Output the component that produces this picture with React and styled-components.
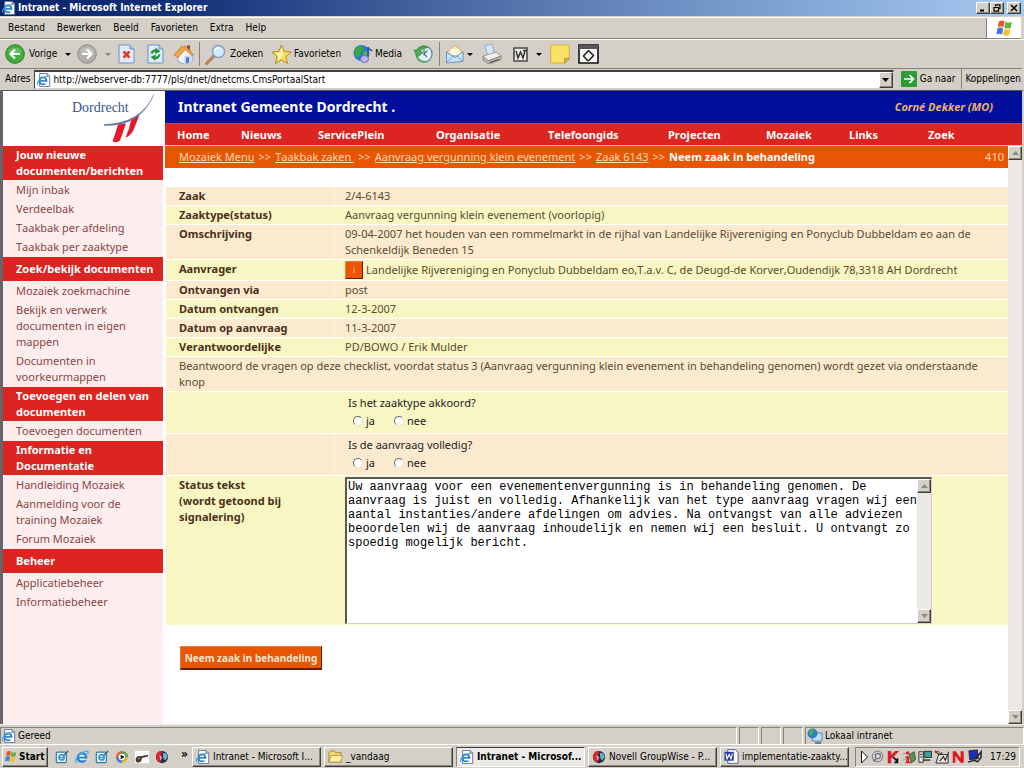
import React from "react";
import styled, { createGlobalStyle, css } from "styled-components";

const UI = '"DejaVu Sans Condensed", "DejaVu Sans", sans-serif';
const PAGE = '"Noto Sans", "Open Sans", sans-serif';
const FACE = "#d4d0c8";

const Global = createGlobalStyle`
  * { box-sizing: border-box; }
  body { margin: 0; background: ${FACE}; font-family: ${UI}; font-size: 10px; line-height: 14px; color: #000; }
  button, input, textarea { font: inherit; color: inherit; margin: 0; }
  button { padding: 0; border: 0; background: none; }
  svg { display: block; flex: none; }
`;

const raised = css`
  border: 1px solid;
  border-color: #fff #404040 #404040 #fff;
  box-shadow: inset -1px -1px 0 #8a877f;
`;
const sunken = css`
  border: 1px solid;
  border-color: #85827a #fff #fff #85827a;
`;

const Screen = styled.div`
  min-height: 100vh;
  display: flex;
  flex-direction: column;
`;

/* ---------- browser chrome ---------- */
const TitleBar = styled.header`
  display: flex;
  align-items: center;
  gap: 2px;
  height: 16px;
  padding: 0 3px 0 2px;
  color: #fff;
  font-weight: bold;
  background: linear-gradient(90deg, #0a246a 0%, #14307a 18%, #46649f 42%, #7295c8 68%, #a6caf0 100%);
  h1 { flex: 1; margin: 0; font-size: 10px; line-height: 16px; }
`;
const WindowButton = styled.button`
  ${raised}
  width: 14px;
  height: 12px;
  background: ${FACE};
  display: grid;
  place-items: center;
  margin-left: ${(p) => (p.$apart ? "1px" : "-2px")};
`;
const MenuBar = styled.nav`
  display: flex;
  align-items: center;
  height: 22px;
  margin-right: 3px;
  padding-left: 8px;
  gap: 12px;
  border-top: 1px solid #fff;
  border-bottom: 1px solid #85827a;
  margin-top: 1px;
`;
const MenuButton = styled.button`line-height: 14px;`;
const FlagBox = styled.div`
  margin-left: auto;
  align-self: stretch;
  width: 35px;
  background: #fff;
  border-left: 1px solid #85827a;
  display: grid;
  place-items: center;
`;
const Toolbar = styled.div`
  display: grid;
  grid-template-columns: 72px 41px 29px 26px 26px 72px 82px 60px 26px 43px 31px 37px 28px 28px;
  align-items: center;
  height: 29px;
  padding-left: 5px;
  border-top: 1px solid #fff;
`;
const Tool = styled.button`
  display: flex;
  align-items: center;
  gap: ${(p) => (p.$snug ? "2px" : "4px")};
  height: 24px;
  padding-left: ${(p) => (p.$divided ? "5px" : "0")};
  border-left: ${(p) => (p.$divided ? "1px solid #85827a" : "0")};
`;
const Arrow = styled.span`
  border: 3px solid transparent;
  border-top-color: ${(p) => (p.$dim ? "#8b8880" : "#000")};
  border-bottom: 0;
  margin-left: ${(p) => (p.$gap ? "4px" : "0")};
`;
const AddressBar = styled.form`
  display: flex;
  align-items: center;
  height: 21px;
  padding-left: 5px;
  margin-right: 2px;
  border-top: 1px solid #85827a;
`;
const AddressField = styled.div`
  flex: 1;
  display: flex;
  align-items: center;
  height: 19px;
  margin: 0 4px;
  padding-left: 2px;
  background: #fff;
  border: 1px solid #d4d0c8;
  border-top: 2px solid #404040;
  border-left: 1px solid #404040;
  input { flex: 1; min-width: 0; border: 0; padding: 0 0 0 2px; outline: 0; background: transparent; }
`;
const SquareButton = styled.button`
  ${raised}
  width: 14px;
  height: ${(p) => p.$h || 14}px;
  flex: none;
  background: ${FACE};
  display: grid;
  place-items: center;
`;
const GoButton = styled.button`
  display: flex;
  align-items: center;
  gap: 3px;
  padding: 0 6px 0 3px;
`;
const LinksButton = styled.button`
  align-self: stretch;
  padding: 0 1px 0 3px;
  border-left: 1px solid #85827a;
`;

/* ---------- page frames ---------- */
const Viewport = styled.div`
  flex: 1;
  display: grid;
  grid-template-columns: 160px minmax(0, 1fr);
  grid-template-rows: auto 1fr;
  column-gap: 2px;
  margin-top: 1px;
  background: #fff;
  border-left: 3px solid #66646a;
  border-right: 2px solid ${FACE};
  border-top: 1px solid #55535a;
  font-family: ${PAGE};
  font-size: 11px;
  line-height: 16px;
  font-kerning: none;
`;
const LogoBox = styled.div`
  display: flex;
  justify-content: flex-end;
  padding-right: 7px;
`;
const Masthead = styled.div`
  display: flex;
  flex-direction: column;
  border-bottom: 1px solid #f1b9a8;
`;
const SiteTitle = styled.div`
  display: flex;
  align-items: center;
  justify-content: space-between;
  height: 32px;
  padding: 0 29px 0 13px;
  background: #00109c;
  color: #fff;
  h2 { margin: 0; font-size: 14px; line-height: 20px; }
  em { font-size: 11px; font-weight: bold; color: #eeb070; }
`;
const SiteNav = styled.nav`
  display: grid;
  grid-template-columns: 64fr 77fr 118fr 112fr 120fr 98fr 83fr 79fr 94fr;
  align-items: center;
  height: 22px;
  padding-left: 12px;
  background: #dc2420;
  border-top: 1px solid #b04a68;
  a { color: #fff; font-weight: bold; text-decoration: none; }
`;
const Sidebar = styled.aside`
  background: #fdeeed;
  padding-bottom: 16px;
  h3 {
    margin: 0;
    padding: 1px 8px 1px 13px;
    font-size: 11px;
    line-height: 16px;
    color: #fff;
    background: #dc2420;
  }
`;
const Single = styled.h3`
  && { padding-top: 4px; padding-bottom: 4px; }
`;
const SideList = styled.ul`
  list-style: none;
  margin: 0;
  padding: 2px 8px 0 13px;
  a { display: block; padding-bottom: 3px; color: #8a4546; text-decoration: none; }
  li:last-child a { padding-bottom: 2px; }
`;
const MainFrame = styled.div`
  display: flex;
  min-width: 0;
`;
const Main = styled.main`
  flex: 1;
  min-width: 0;
  padding-bottom: 20px;
`;
const Crumbs = styled.nav`
  display: flex;
  align-items: center;
  gap: 4px;
  height: 22px;
  padding: 0 4px 0 14px;
  margin-bottom: 18px;
  background: #ea5504;
  color: #fbd9b4;
  white-space: nowrap;
  a { color: #fbd9b4; }
  strong { color: #fff; }
  span:last-child { margin-left: auto; }
`;
const CaseTable = styled.table`
  width: calc(100% - 1px);
  margin-left: 1px;
  border-collapse: separate;
  border-spacing: 0 1px;
  color: #5c4a33;
  th, td { vertical-align: top; text-align: left; padding: 1px 12px 1px 13px; }
  th { width: 169px; color: #4c2f1a; border-right: 1px solid #fdf6dc; }
  td { padding-left: 10px; }
  td[colspan] { padding-left: 13px; }
`;
const Row = styled.tr`
  background: ${(p) => (p.$alt ? "#f8f6c2" : "#fbeacd")};
`;
const Applicant = styled.div`
  display: flex;
  align-items: center;
  gap: 3px;
  height: 18px;
`;
const InfoButton = styled.button`
  width: 18px;
  height: 18px;
  border: 1px solid;
  border-color: #f37a35 #5c1f10 #5c1f10 #f37a35;
  background: #ea5504;
  color: #fbd9b4;
  font-size: 8px;
  line-height: 14px;
`;
const Question = styled.fieldset`
  border: 0;
  margin: 0;
  padding: 2px 0 2px 3px;
  color: #222;
  legend { padding: 0; float: left; }
  div { clear: both; display: flex; gap: 19px; padding: 1px 0 0 5px; }
  label { display: flex; align-items: center; gap: 3px; height: 18px; }
  input {
    appearance: none;
    width: 10px;
    height: 10px;
    border-radius: 50%;
    background: #fff;
    border: 1px solid;
    border-color: #6d6a60 #e4e0cc #e4e0cc #6d6a60;
  }
  input:checked { background: radial-gradient(#000 0 2px, #fff 3px); }
`;
const StatusBox = styled.div`
  display: flex;
  max-width: 587px;
  height: 147px;
  border: 1px solid #d4d0c8;
  border-top: 2px solid #5a5850;
  border-left: 2px solid #5a5850;
  background: #fff;
  textarea {
    flex: 1;
    min-width: 0;
    border: 0;
    padding: 1px 0 0 1px;
    outline: 0;
    resize: none;
    overflow: hidden;
    white-space: pre;
    font-family: "Liberation Mono", monospace;
    font-size: 12px;
    line-height: 14px;
    color: #000;
    background: transparent;
  }
`;
const ScrollTrack = styled.div`
  width: 14px;
  flex: none;
  display: flex;
  flex-direction: column;
  justify-content: space-between;
  background: #ebe9e6;
`;
const SubmitButton = styled.button`
  margin: 20px 0 0 15px;
  width: 142px;
  height: 24px;
  border: 1px solid;
  border-color: #f37a35 #5c1f10 #5c1f10 #f37a35;
  border-bottom-width: 2px;
  background: #ea5504;
  color: #fde6d0;
  font-size: 10px;
  font-weight: bold;
`;

/* ---------- status bar and task bar ---------- */
const StatusBar = styled.footer`
  display: grid;
  grid-template-columns: minmax(0, 1fr) 20px 20px 20px 219px;
  gap: 2px;
  height: 20px;
  padding-top: 2px;
  border-top: 1px solid #f4f3f0;
`;
const StatusCell = styled.div`
  ${sunken}
  display: flex;
  align-items: center;
  gap: 2px;
  padding-left: 1px;
`;
const TaskBar = styled.div`
  display: flex;
  align-items: center;
  height: 24px;
  padding: 1px 4px 1px 2px;
  border-top: 1px solid #fff;
`;
const StartButton = styled.button`
  ${raised}
  display: flex;
  align-items: center;
  gap: 2px;
  width: 46px;
  height: 20px;
  padding-left: 1px;
  font-weight: bold;
`;
const QuickLaunch = styled.div`
  display: flex;
  align-items: center;
  gap: 6px;
  padding: 0 4px 0 7px;
  strong { font-size: 12px; line-height: 12px; padding: 0 0 6px 6px; }
`;
const Tasks = styled.div`
  flex: 1;
  min-width: 0;
  display: flex;
  gap: 3px;
`;
const Task = styled.button`
  ${(p) => (p.$active ? sunken : raised)}
  flex: 1;
  min-width: 0;
  height: 20px;
  display: flex;
  align-items: center;
  gap: 3px;
  padding: 0 3px;
  background: ${(p) => (p.$active ? "#eceae6" : FACE)};
  font-weight: ${(p) => (p.$active ? "bold" : "normal")};
  border-top-color: ${(p) => (p.$active ? "#404040" : "#fff")};
  text-align: left;
  white-space: nowrap;
`;
const Tray = styled.div`
  ${sunken}
  display: flex;
  align-items: center;
  gap: 2px;
  height: 20px;
  width: 165px;
  margin-left: 6px;
  padding: 0 3px 0 4px;
  time { margin-left: auto; }
`;

/* ---------- drawings ---------- */
const Svg = ({ w = 16, h = w, box = "0 0 16 16", children }) => (
  <svg width={w} height={h} viewBox={box} aria-hidden="true">{children}</svg>
);
const IePage = ({ s = 14 }) => (
  <Svg w={s}>
    <path d="M3 .5h8.500L14.500 3.500V15.500H3Z" fill="#fff" stroke="#5a6b91" />
    <path d="M11.500 .5v3h3" fill="#cdd8ea" stroke="#5a6b91" />
    <circle cx="6.800" cy="9" r="4" fill="#fff" stroke="#1f7fce" strokeWidth="2.200" />
    <path d="M3.500 9h7" stroke="#1f7fce" strokeWidth="1.800" />
    <path d="M8.500 10h4v2.200h-4z" fill="#fff" />
    <path d="M1 13.500C-1 10 6 3.500 12 4" fill="none" stroke="#3f9fe0" strokeWidth="1.200" />
  </Svg>
);
const IeLogo = ({ s = 15 }) => (
  <Svg w={s}>
    <circle cx="8" cy="8.500" r="4.800" fill="#e8f4fc" stroke="#1e80d0" strokeWidth="2.600" />
    <path d="M3.500 8.700h9" stroke="#1e80d0" strokeWidth="2" />
    <path d="M10 9.800h5v2h-5z" fill={FACE} />
    <path d="M2 15C-2 10 7 1 14.500 1.500c1 .5.500 2-.5 3.500" fill="none" stroke="#4aa8e8" strokeWidth="1.400" />
  </Svg>
);
const Flag = ({ s = 16 }) => (
  <Svg w={s}>
    <path d="M3.500 2Q6 .5 8.500 2L7.500 7.500Q5 6 2.500 7.300Z" fill="#e8572a" />
    <path d="M9.300 2.500Q12 4 15 2.500L14 8Q11 9.200 8.300 7.800Z" fill="#62b144" />
    <path d="M2.300 8.200Q5 7 7.300 8.400L6.300 13.800Q4 12.500 1.200 13.800Z" fill="#3d7bd8" />
    <path d="M8.200 8.700Q11 10.200 13.800 8.900L12.800 14.300Q10 15.500 7.200 14.200Z" fill="#f4c12c" />
  </Svg>
);
const Glyph = ({ d, sw = 1.5 }) => (
  <Svg w={8} box="0 0 8 8"><path d={d} fill="none" stroke="#000" strokeWidth={sw} /></Svg>
);
const Tri = ({ up, color = "#8b8880" }) => (
  <Svg w={7} h={4} box="0 0 7 4"><path d={up ? "M0 4L3.500 0L7 4Z" : "M0 0h7L3.500 4Z"} fill={color} /></Svg>
);
const RoundArrow = ({ back }) => (
  <Svg w={20} box="0 0 20 20">
    <circle cx="10" cy="10" r="9.300" fill={back ? "#3fae3c" : "#b2b0ac"} stroke={back ? "#2b7e29" : "#8f8d89"} />
    <path d="M3 8a7.500 6.500 0 0 1 14 0q-7 3-14 0Z" fill="#fff" opacity=".22" />
    <path d={back ? "M15 10H6M10 5.500L5.500 10L10 14.500" : "M5 10h9M10 5.500L14.500 10L10 14.500"} fill="none" stroke="#fff" strokeWidth="2.200" />
  </Svg>
);
const Sheet = ({ children }) => (
  <Svg w={17} h={20} box="0 0 17 20">
    <path d="M1 1h11l4 4v14H1Z" fill="#dfeafb" stroke="#6f8fc4" />
    <path d="M12 1v4h4" fill="#b9cdeb" stroke="#6f8fc4" />
    {children}
  </Svg>
);
const StopIcon = () => (
  <Sheet><path d="M5.500 7.500l6 6M11.500 7.500l-6 6" stroke="#e23a1c" strokeWidth="2.600" /></Sheet>
);
const RefreshIcon = () => (
  <Sheet>
    <path d="M4.500 9.500Q6 5.500 10 7" fill="none" stroke="#1d9632" strokeWidth="2.200" />
    <path d="M8.500 3.500l4.800 4L8 10Z" fill="#1d9632" />
    <path d="M12.500 10.500Q11 15 7 13.500" fill="none" stroke="#1d9632" strokeWidth="2.200" />
    <path d="M8.500 17L3.500 13l5.300-2.500Z" fill="#1d9632" />
  </Sheet>
);
const HomeIcon = () => (
  <Svg w={21} box="0 0 21 21">
    <path d="M14 1.500h3v5h-3z" fill="#8c4a2b" />
    <path d="M5 10l7-6 7 7v7l-8 2-6-2.500Z" fill="#f5f6fb" stroke="#7f92bd" strokeWidth=".8" />
    <path d="M11 12l8-1v7l-8 2Z" fill="#cfdcf2" />
    <path d="M.8 11L8 3l5-.8 7.500 8.500-1.700.8L12 5.500 5 13.500Z" fill="#f2a343" stroke="#a9672a" strokeWidth=".6" />
    <path d="M13 13.500l3-.4v5.400l-3 .7Z" fill="#4b79c4" />
  </Svg>
);
const SearchIcon = () => (
  <Svg w={21} box="0 0 21 21">
    <path d="M1.500 19.500L9 12" stroke="#b98463" strokeWidth="3.200" strokeLinecap="round" />
    <circle cx="13.500" cy="7.500" r="6" fill="#cfeafb" stroke="#7d9cc4" strokeWidth="1.300" />
    <path d="M9.800 6.500q1.500-3 4.500-2.700" fill="none" stroke="#fff" strokeWidth="1.500" />
  </Svg>
);
const StarIcon = () => (
  <Svg w={21} box="0 0 21 21">
    <path d="M10.500 1l2.700 6.400 7 .6-5.300 4.600 1.700 7-6.100-3.800-6.100 3.800 1.700-7L.8 8l7-.6Z" fill="#f9dc55" stroke="#b88a1c" />
    <path d="M10.500 3.500l1.700 5-1.700 5.500-3.800 2.500 1-4.500L4 9l4.500-.7Z" fill="#fff3a8" />
  </Svg>
);
const MediaIcon = () => (
  <Svg w={20} box="0 0 20 20">
    <circle cx="8.500" cy="9" r="8" fill="#2d79c9" />
    <path d="M2 5q3-4 7-3l2 3-3 3-1 4-3 1Q0 10 2 5Z" fill="#3aa545" />
    <path d="M10 8l4-1 2 3-2 4-3-1Z" fill="#52b95a" />
    <path d="M15 3v10M15 3q1 3 4.500 3.500" fill="none" stroke="#3a4fa0" strokeWidth="1.600" />
    <ellipse cx="11.500" cy="15" rx="4" ry="3.600" fill="#b9b6ec" stroke="#6d6ac0" />
  </Svg>
);
const HistoryIcon = () => (
  <Svg w={20} box="0 0 20 20">
    <circle cx="11" cy="10" r="8" fill="#e2f1fa" stroke="#6b8f9e" strokeWidth="1.400" />
    <path d="M11 4.500V10l3.500-3.500M11 10l3 3" fill="none" stroke="#4e7285" strokeWidth="1.200" />
    <path d="M15 3.500Q8 0 4 6.500L1 6l3.500 7L10 8.500 7 7.500Q9.500 3.500 15 3.500Z" fill="#4bb24c" stroke="#2b7e2d" strokeWidth=".7" />
    <path d="M4 12.500Q6 18 12 17.500" fill="none" stroke="#4bb24c" strokeWidth="1.800" />
  </Svg>
);
const MailIcon = () => (
  <Svg w={20} box="0 0 20 20">
    <path d="M2 8l8-7 8 7v3H2Z" fill="#fbe3ae" stroke="#c79d5c" strokeWidth=".8" />
    <path d="M5 5h9v6H5Z" fill="#fff7e0" />
    <path d="M1.500 8l8.500 5.500L18 7.500v10L1.500 19Z" fill="#c3e2f8" stroke="#5f8fc0" strokeWidth=".9" />
    <path d="M1.500 19l6.500-7M18 17.500L12 12" stroke="#5f8fc0" strokeWidth=".8" />
  </Svg>
);
const PrintIcon = () => (
  <Svg w={20} h={21} box="0 0 20 21">
    <path d="M3 1.500l7-1 2.500 9-7 1.500Z" fill="#d6eafc" stroke="#7ba0d0" strokeWidth=".8" />
    <path d="M1 12l13-4 5 4-13 5Z" fill="#efeeec" stroke="#8c8a86" strokeWidth=".8" />
    <path d="M1 12v4l6 4 12-4.500V12L6.500 17Z" fill="#bdbbb6" stroke="#7e7c78" strokeWidth=".8" />
    <path d="M8 18.500l9-3" stroke="#4b4a48" strokeWidth="1.200" />
  </Svg>
);
const WordEdit = () => (
  <Svg w={15} box="0 0 15 15">
    <path d="M1 1h13v13H1Z" fill="#f1efeb" stroke="#4a4a4a" strokeWidth="1.600" />
    <path d="M3 4l2 7 2.500-6L10 11l2-7M10 3.500h3.500" fill="none" stroke="#333" strokeWidth="1.500" />
  </Svg>
);
const NoteIcon = () => (
  <Svg w={20} box="0 0 20 20">
    <path d="M.7 1h18.600v13.500L14.500 19H.7Z" fill="#fbe168" stroke="#cfa628" strokeWidth=".8" />
    <path d="M14.500 19v-4.500h4.800Z" fill="#e8b93a" stroke="#a67f16" strokeWidth=".7" />
  </Svg>
);
const FrameIcon = () => (
  <Svg w={21} h={20} box="0 0 21 20">
    <path d="M1 1h19v18H1Z" fill="#f5f4f1" stroke="#111" strokeWidth="1.600" />
    <path d="M1 1h19v4H1Z" fill="#55555a" />
    <path d="M10.500 6.500l-5 5.500 4.500 5M10.500 6.500l5 5-5 5.500" fill="none" stroke="#222" strokeWidth="1.500" />
  </Svg>
);
const GoIcon = () => (
  <Svg w={16}>
    <rect width="16" height="16" rx="1" fill="#2f9a38" />
    <path d="M3 8h9M8.500 4l4 4-4 4" fill="none" stroke="#fff" strokeWidth="1.700" />
  </Svg>
);
const NoteBook = () => (
  <Svg w={14}>
    <rect x="1.500" y="2.500" width="11.500" height="12" rx="1.500" fill="#e6f4fb" stroke="#2f7fae" strokeWidth="1.400" />
    <circle cx="7.500" cy="8.500" r="3" fill="none" stroke="#2b8fc8" strokeWidth="1.700" />
    <path d="M5 8.700h5" stroke="#2b8fc8" strokeWidth="1.300" />
    <path d="M10.500 6l4.500-5" stroke="#2c5f86" strokeWidth="1.600" />
  </Svg>
);
const PlayerIcon = () => (
  <Svg w={14}>
    <path d="M8 8V1a7 7 0 0 0-7 7Z" fill="#e9662c" />
    <path d="M8 8H1a7 7 0 0 0 7 7Z" fill="#3c7fd6" />
    <path d="M8 8v7a7 7 0 0 0 7-7Z" fill="#f2bf2f" />
    <path d="M8 8h7a7 7 0 0 0-7-7Z" fill="#54a944" />
    <circle cx="8" cy="8" r="4.300" fill="#fff" stroke="#444" strokeWidth=".6" />
    <path d="M6.500 5.300L11 8l-4.500 2.700Z" fill="#111" />
  </Svg>
);
const HandIcon = () => (
  <Svg w={14}>
    <rect y="1" width="16" height="14" fill="#fff" />
    <path d="M1 9q2-3 5-2l9-1.500v2L8 9l-1 4-4 1.500Q0 13 1 9Z" fill="#4c3a2b" />
    <path d="M3 10l3-1" stroke="#c69a6c" />
  </Svg>
);
const GroupWise = () => (
  <Svg w={14}>
    <circle cx="8" cy="8" r="7" fill="#16324a" />
    <path d="M1.500 5Q4 0 8 1.500L7 6l2 3-3 5Q0 12 1.500 5Z" fill="#d8262c" />
    <path d="M9 3l4 1 1.500 4-3 4-2-3Z" fill="#67b8c4" />
    <path d="M5 7l2 1-1 3" stroke="#fff" fill="none" />
  </Svg>
);
const FolderIcon = () => (
  <Svg w={15}>
    <path d="M1 4l2-2h4l1 2h6v10H1Z" fill="#f3d873" stroke="#a8862c" />
    <path d="M3.500 7H15.500L13.500 14H1Z" fill="#fdf0a6" stroke="#a8862c" strokeWidth=".8" />
  </Svg>
);
const WordDoc = () => (
  <Svg w={15}>
    <path d="M4 .7h8L15 4v11.300H4Z" fill="#fff" stroke="#56607c" />
    <rect x=".5" y="3" width="10" height="9.500" fill="#29419a" />
    <path d="M2 5l1.300 5.500L5.500 6l2 4.500L9 5" fill="none" stroke="#fff" strokeWidth="1.200" />
  </Svg>
);
const NetIcon = () => (
  <Svg w={16}>
    <path d="M5 5h10v8H5Z" fill="#bfe1f5" stroke="#5a86a8" />
    <circle cx="5.500" cy="5.500" r="5" fill="#2f7fc9" />
    <path d="M2 3q3-3 5-1l-1 3-3 3Z" fill="#47b04b" />
    <path d="M8 15h6" stroke="#4a6c86" strokeWidth="1.600" />
  </Svg>
);
const Speaker = () => (
  <Svg w={13}>
    <circle cx="8" cy="8" r="6.500" fill="#c9c9cc" stroke="#77777c" strokeWidth="1.200" />
    <circle cx="8.500" cy="7.500" r="3" fill="#e9e9ec" stroke="#66666c" strokeWidth="1.400" />
    <path d="M3 14l3-3" stroke="#55555a" strokeWidth="1.500" />
  </Svg>
);
const Kaspersky = () => (
  <Svg w={14}>
    <path d="M2 1h4v4.500L10.500 1H15L9 7.500 6 10v5H2Z" fill="#dc1f2a" />
    <path d="M8 8l5 5v-3.500M13.500 14H9.500" fill="none" stroke="#111" strokeWidth="2" />
  </Svg>
);
const InfoBug = () => (
  <Svg w={14}>
    <path d="M8 5l6-3 1.500 9-5 4Z" fill="#5b8f4d" stroke="#2c3e28" strokeWidth=".8" />
    <path d="M1 5l5-2M1 12l3-2" stroke="#8a8a8a" />
    <circle cx="6.500" cy="3.500" r="2" fill="#d9232b" />
    <path d="M4 7h4v6h1.500v2H4v-2h1V9H4Z" fill="#d9232b" />
  </Svg>
);
const ServerIcon = () => (
  <Svg w={14}>
    <path d="M1 2h5v12H1Z" fill="#e9e7e2" stroke="#222" />
    <path d="M2 5h3M2 8h3" stroke="#222" />
    <path d="M7 1.500h8.500v7H7Z" fill="#3f9d98" stroke="#222" />
    <path d="M6 11.500h8" stroke="#222" strokeWidth="1.500" />
  </Svg>
);
const PlugIcon = () => (
  <Svg w={15}>
    <path d="M5 6h10v9H2Z" fill="#e9e7e2" stroke="#222" />
    <path d="M1 2l4 4 4-2M6 13l4-5 2 4 4-9" fill="none" stroke="#3a3030" strokeWidth="1.300" />
    <path d="M1 4q3-3 5 0" stroke="#c33" fill="none" strokeWidth="1.400" />
  </Svg>
);
const NovellIcon = () => (
  <Svg w={14}><path d="M2 14.500V1.500h3.500L11 9.500v-8h3.500v13H11L5 6.500v8Z" fill="#e0161f" /></Svg>
);
const DisplayIcon = () => (
  <Svg w={15}>
    <path d="M2 2l9-1 1 9-9 1.500Z" fill="#1c2fb8" stroke="#22242e" />
    <path d="M1 14l7-2 4 2M9 11l6-8v6l-4 5" fill="none" stroke="#22242e" strokeWidth="1.600" />
  </Svg>
);
const Chevron = () => (
  <Svg w={9} h={14} box="0 0 9 14"><path d="M1.500 1l6 6-6 6Z" fill="#fff" stroke="#111" /></Svg>
);
const DordrechtLogo = () => (
  <svg width="88" height="54" viewBox="0 0 88 54" role="img" aria-label="Dordrecht">
    <text x="4" y="21" fontFamily='"Liberation Serif", serif' fontSize="14" fill="#39538c">Dordrecht</text>
    <path d="M36 34.500Q72 36 86 3.500Q73 32.500 36 33.500Z" fill="#5a71a3" stroke="#5a71a3" strokeWidth=".4" />
    <path d="M50 33.500L58 32.500 52 49.500Q48.500 52.500 44.500 50.500Q47.500 42 50 33.500Z" fill="#e21a2c" />
    <path d="M63 29.500L71.500 24 65.500 39Q62.500 45 57.500 46.500Q61.500 38 63 29.500Z" fill="#e21a2c" />
  </svg>
);

/* ---------- content ---------- */
const menu = ["Bestand", "Bewerken", "Beeld", "Favorieten", "Extra", "Help"];
const siteNav = ["Home", "Nieuws", "ServicePlein", "Organisatie", "Telefoongids", "Projecten", "Mozaiek", "Links", "Zoek"];
const sections = [
  { title: "Jouw nieuwe documenten/berichten", items: ["Mijn inbak", "Verdeelbak", "Taakbak per afdeling", "Taakbak per zaaktype"] },
  { title: "Zoek/bekijk documenten", single: true, items: ["Mozaiek zoekmachine", "Bekijk en verwerk documenten in eigen mappen", "Documenten in voorkeurmappen"] },
  { title: "Toevoegen en delen van documenten", items: ["Toevoegen documenten"] },
  { title: "Informatie en Documentatie", items: ["Handleiding Mozaiek", "Aanmelding voor de training Mozaiek", "Forum Mozaiek"] },
  { title: "Beheer", single: true, items: ["Applicatiebeheer", "Informatiebeheer"] },
];
const facts = [
  ["Zaak", "2/4-6143"],
  ["Zaaktype(status)", "Aanvraag vergunning klein evenement (voorlopig)"],
  ["Omschrijving", "09-04-2007 het houden van een rommelmarkt in de rijhal van Landelijke Rijvereniging en Ponyclub Dubbeldam eo aan de Schenkeldijk Beneden 15"],
  ["Aanvrager", "Landelijke Rijvereniging en Ponyclub Dubbeldam eo,T.a.v. C, de Deugd-de Korver,Oudendijk 78,3318 AH Dordrecht"],
  ["Ontvangen via", "post"],
  ["Datum ontvangen", "12-3-2007"],
  ["Datum op aanvraag", "11-3-2007"],
  ["Verantwoordelijke", "PD/BOWO / Erik Mulder"],
];
const statusText = [
  "Uw aanvraag voor een evenementenvergunning is in behandeling genomen. De",
  "aanvraag is juist en volledig. Afhankelijk van het type aanvraag vragen wij een",
  "aantal instanties/andere afdelingen om advies. Na ontvangst van alle adviezen",
  "beoordelen wij de aanvraag inhoudelijk en nemen wij een besluit. U ontvangt zo",
  "spoedig mogelijk bericht.",
].join("\n");

const Scrollbar = () => (
  <ScrollTrack>
    <SquareButton type="button" aria-label="Omhoog"><Tri up /></SquareButton>
    <SquareButton type="button" aria-label="Omlaag"><Tri /></SquareButton>
  </ScrollTrack>
);
const YesNo = ({ name, text }) => (
  <Question>
    <legend>{text}</legend>
    <div>
      <label><input type="radio" name={name} value="ja" />ja</label>
      <label><input type="radio" name={name} value="nee" />nee</label>
    </div>
  </Question>
);

export default function App() {
  return (
    <Screen>
      <Global />
      <TitleBar>
        <IePage />
        <h1>Intranet - Microsoft Internet Explorer</h1>
        <WindowButton aria-label="Minimaliseren"><Glyph d="M1 6.500h4" sw={2} /></WindowButton>
        <WindowButton aria-label="Herstellen"><Glyph d="M2.500 2.500V.9H7v3.600H5.500M1 3.500h4.500v3.600H1Z" sw={1.200} /></WindowButton>
        <WindowButton $apart aria-label="Sluiten"><Glyph d="M1 1l6 6M7 1L1 7" /></WindowButton>
      </TitleBar>
      <MenuBar>
        {menu.map((m) => <MenuButton key={m}>{m}</MenuButton>)}
        <FlagBox><Flag s={18} /></FlagBox>
      </MenuBar>
      <Toolbar>
        <Tool>
          <RoundArrow back />Vorige<Arrow $gap />
        </Tool>
        <Tool aria-label="Volgende"><RoundArrow /><Arrow $dim $gap /></Tool>
        <Tool aria-label="Stoppen"><StopIcon /></Tool>
        <Tool aria-label="Vernieuwen"><RefreshIcon /></Tool>
        <Tool aria-label="Startpagina"><HomeIcon /></Tool>
        <Tool $divided><SearchIcon />Zoeken</Tool>
        <Tool $snug><StarIcon />Favorieten</Tool>
        <Tool $snug><MediaIcon />Media</Tool>
        <Tool aria-label="Geschiedenis"><HistoryIcon /></Tool>
        <Tool $divided $snug aria-label="E-mail"><MailIcon /><Arrow /></Tool>
        <Tool aria-label="Afdrukken"><PrintIcon /></Tool>
        <Tool aria-label="Bewerken"><WordEdit /><Arrow $gap /></Tool>
        <Tool aria-label="Notitie"><NoteIcon /></Tool>
        <Tool aria-label="Bron"><FrameIcon /></Tool>
      </Toolbar>
      <AddressBar onSubmit={(e) => e.preventDefault()}>
        <label htmlFor="adres">Adres</label>
        <AddressField>
          <IePage s={14} />
          <input id="adres" defaultValue="http://webserver-db:7777/pls/dnet/dnetcms.CmsPortaalStart" />
          <SquareButton type="button" $h={16} aria-label="Adressen"><Tri color="#000" /></SquareButton>
        </AddressField>
        <GoButton type="submit"><GoIcon />Ga naar</GoButton>
        <LinksButton type="button">Koppelingen</LinksButton>
      </AddressBar>

      <Viewport>
        <LogoBox><DordrechtLogo /></LogoBox>
        <Masthead>
          <SiteTitle><h2>Intranet Gemeente Dordrecht .</h2><em>Corné Dekker (MO)</em></SiteTitle>
          <SiteNav>{siteNav.map((n) => <a key={n} href="#nav">{n}</a>)}</SiteNav>
        </Masthead>
        <Sidebar>
          {sections.map((s) => (
            <React.Fragment key={s.title}>
              {s.single ? <Single>{s.title}</Single> : <h3>{s.title}</h3>}
              <SideList>
                {s.items.map((i) => <li key={i}><a href="#menu">{i}</a></li>)}
              </SideList>
            </React.Fragment>
          ))}
        </Sidebar>
        <MainFrame>
          <Main>
            <Crumbs>
              <a href="#c1">Mozaiek Menu</a><span>&gt;&gt;</span>
              <a href="#c2">Taakbak zaken&nbsp;</a><span>&gt;&gt;</span>
              <a href="#c3">Aanvraag vergunning klein evenement</a><span>&gt;&gt;</span>
              <a href="#c4">Zaak 6143</a><span>&gt;&gt;</span>
              <strong>Neem zaak in behandeling</strong>
              <span>410</span>
            </Crumbs>
            <form onSubmit={(e) => e.preventDefault()}>
              <CaseTable>
                <tbody>
                  {facts.map(([label, value], i) => (
                    <Row key={label} $alt={i % 2 === 1}>
                      <th scope="row">{label}</th>
                      <td>
                        {label === "Aanvrager"
                          ? <Applicant><InfoButton type="button" aria-label="Informatie">i</InfoButton>{value}</Applicant>
                          : value}
                      </td>
                    </Row>
                  ))}
                  <Row>
                    <td colSpan={2}>Beantwoord de vragen op deze checklist, voordat status 3 (Aanvraag vergunning klein evenement in behandeling genomen) wordt gezet via onderstaande knop</td>
                  </Row>
                  <Row $alt><th /><td><YesNo name="zaaktype" text="Is het zaaktype akkoord?" /></td></Row>
                  <Row><th /><td><YesNo name="volledig" text="Is de aanvraag volledig?" /></td></Row>
                  <Row $alt>
                    <th scope="row"><label htmlFor="status">Status tekst<br />(wordt getoond bij signalering)</label></th>
                    <td>
                      <StatusBox>
                        <textarea id="status" defaultValue={statusText} />
                        <Scrollbar />
                      </StatusBox>
                    </td>
                  </Row>
                </tbody>
              </CaseTable>
              <SubmitButton type="submit">Neem zaak in behandeling</SubmitButton>
            </form>
          </Main>
          <Scrollbar />
        </MainFrame>
      </Viewport>

      <StatusBar>
        <StatusCell><IePage s={14} />Gereed</StatusCell>
        <StatusCell /><StatusCell /><StatusCell />
        <StatusCell><NetIcon />Lokaal intranet</StatusCell>
      </StatusBar>
      <TaskBar>
        <StartButton><Flag s={13} />Start</StartButton>
        <QuickLaunch>
          <NoteBook /><IeLogo s={14} /><NoteBook /><PlayerIcon /><HandIcon /><GroupWise />
          <strong>»</strong>
        </QuickLaunch>
        <Tasks>
          <Task><IePage />Intranet - Microsoft I...</Task>
          <Task><FolderIcon />_vandaag</Task>
          <Task $active><IePage />Intranet - Microsof...</Task>
          <Task><GroupWise />Novell GroupWise - P...</Task>
          <Task><WordDoc />implementatie-zaakty...</Task>
        </Tasks>
        <Tray>
          <Chevron /><Speaker /><Kaspersky /><InfoBug /><ServerIcon /><PlugIcon /><NovellIcon /><DisplayIcon />
          <time>17:29</time>
        </Tray>
      </TaskBar>
    </Screen>
  );
}
